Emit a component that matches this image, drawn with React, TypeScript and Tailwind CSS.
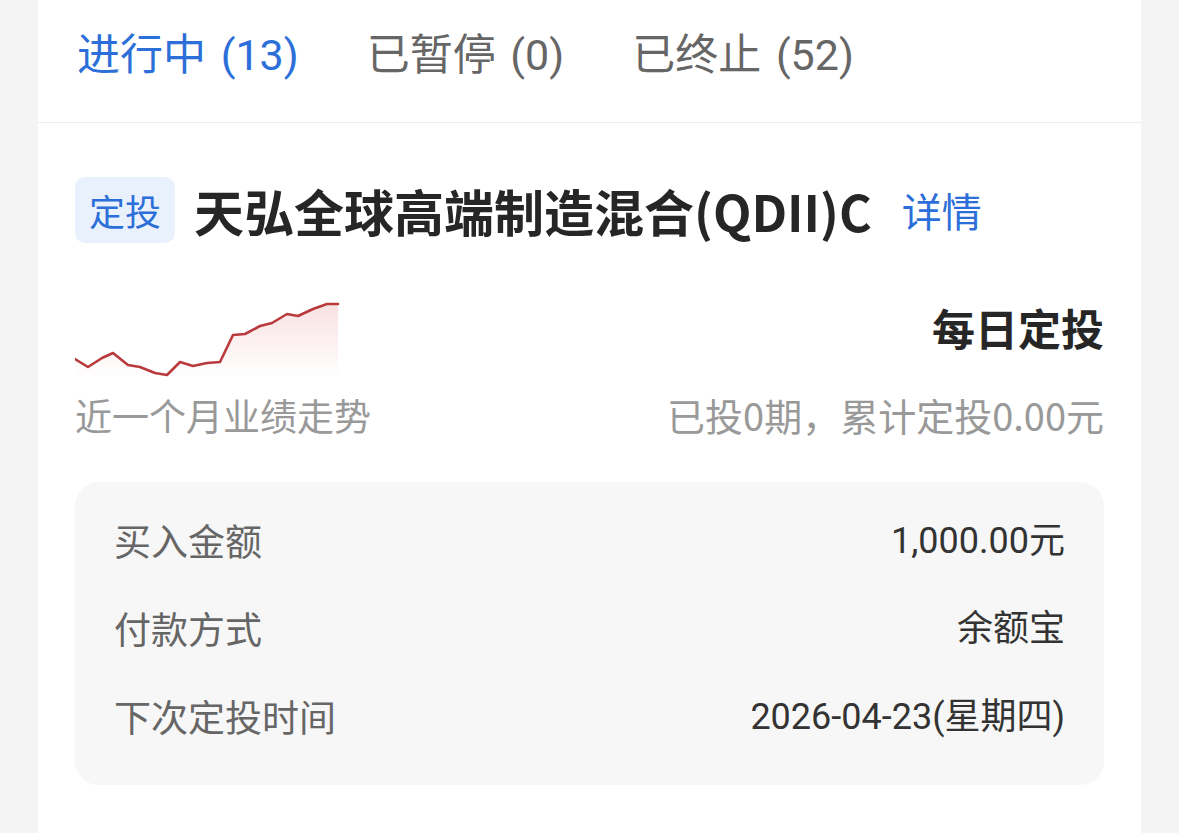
import React from 'react';

const CJK = "font-['Noto_Sans_CJK_SC','Noto_Sans',sans-serif]";
const NUM = "font-['Roboto','Noto_Sans_CJK_SC',sans-serif]";

const points: [number, number][] = [
  [0, 59], [13, 67], [27, 58], [38, 53], [53, 65], [65, 67], [80, 73], [92, 75],
  [105, 62], [118, 66], [132, 63], [145, 62], [158, 35], [170, 34], [185, 26],
  [197, 23], [212, 14], [223, 16], [238, 9], [252, 4], [263, 4],
];

function Sparkline() {
  const line = points.map(([x, y], i) => `${i === 0 ? 'M' : 'L'}${x} ${y}`).join(' ');
  const area = `${line} L263 78 L0 78 Z`;
  return (
    <svg width="265" height="78" viewBox="0 0 265 78" className="block">
      <defs>
        <linearGradient id="spark" x1="0" y1="0" x2="0" y2="1">
          <stop offset="0%" stopColor="#d9484a" stopOpacity="0.16" />
          <stop offset="100%" stopColor="#d9484a" stopOpacity="0" />
        </linearGradient>
      </defs>
      <path d={area} fill="url(#spark)" />
      <path d={line} fill="none" stroke="#b83a3c" strokeWidth="2.6" strokeLinejoin="round" strokeLinecap="round" />
    </svg>
  );
}

const rows = [
  { label: '买入金额', value: '1,000.00元' },
  { label: '付款方式', value: '余额宝' },
  { label: '下次定投时间', value: '2026-04-23(星期四)' },
];

export default function App() {
  return (
    <div className={`min-h-screen bg-[#f4f4f4] px-[38px] ${CJK}`}>
      <div className="bg-white min-h-[833px]">
        {/* tabs */}
        <div className={`h-[123px] border-b border-[#ececec] flex items-center gap-[68px] pl-[39px] pb-[12px] ${NUM}`}>
          <span className="text-[43px] leading-[50px] [word-spacing:4px] text-[#2d6fd8]">进行中 (13)</span>
          <span className="text-[43px] leading-[50px] [word-spacing:4px] text-[#666]">已暂停 (0)</span>
          <span className="text-[43px] leading-[50px] [word-spacing:4px] text-[#666]">已终止 (52)</span>
        </div>

        <div className="px-[37px] pt-[54px]">
          {/* title */}
          <div className="flex items-center">
            <div className="w-[100px] h-[66px] rounded-[10px] bg-[#e9f1fd] flex items-center justify-center text-[36px] text-[#2d6fd8]">
              定投
            </div>
            <h1 className="ml-[19px] text-[50px] leading-[60px] font-bold text-[#262626]">
              天弘全球高端制造混合(QDII)C
            </h1>
            <span className="ml-[30px] text-[40px] leading-[48px] text-[#2d6fd8]">详情</span>
          </div>

          {/* chart row */}
          <div className="mt-[57px] flex justify-between items-start">
            <Sparkline />
            <span className="mt-[1px] text-[43px] leading-[52px] font-bold text-[#262626]">每日定投</span>
          </div>
          <div className="mt-[14px] flex justify-between items-center">
            <span className="text-[37px] leading-[46px] text-[#999]">近一个月业绩走势</span>
            <span className="text-[38px] leading-[46px] text-[#999]">已投0期，累计定投0.00元</span>
          </div>

          {/* details */}
          <div className="mt-[44px] rounded-[24px] bg-[#f7f7f7] px-[39px] pt-[15px] pb-[24px]">
            {rows.map((r) => (
              <div key={r.label} className="h-[88px] flex items-center justify-between">
                <span className="text-[37px] text-[#666]">{r.label}</span>
                <span className={`text-[36px] text-[#333] ${NUM}`}>{r.value}</span>
              </div>
            ))}
          </div>
        </div>
      </div>
    </div>
  );
}
